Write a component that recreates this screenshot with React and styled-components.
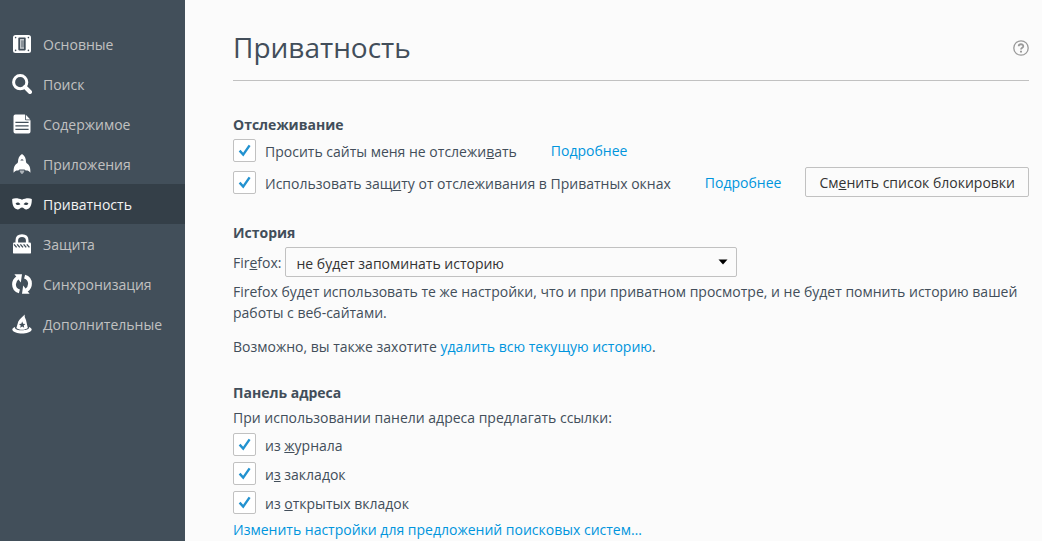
import React from "react";
import styled, { createGlobalStyle } from "styled-components";

const GlobalStyle = createGlobalStyle`
  * { box-sizing: border-box; }
  body {
    margin: 0;
    background: #fbfbfb;
    color: #424e5a;
    font: 14px/21px "Open Sans", "Noto Sans", sans-serif;
  }
`;

const Page = styled.div`
  display: flex;
  min-height: 100vh;
`;

const Sidebar = styled.nav`
  flex: 0 0 185px;
  padding-top: 24px;
  background: #424f5a;
`;

const Category = styled.a`
  display: flex;
  align-items: center;
  gap: 11px;
  height: 40px;
  padding-left: 12px;
  color: ${(p) => (p.$active ? "#f2f2f2" : "#c1c1c1")};
  background: ${(p) => (p.$active ? "#343f48" : "transparent")};
  text-decoration: none;
`;

const Icon = styled.svg`
  width: 20px;
  height: 20px;
  flex: none;
  fill: #fff;
  stroke: none;
`;

const Main = styled.main`
  flex: 1;
  min-width: 0;
  padding: 0 4px 0 48px;
`;

const Header = styled.header`
  display: flex;
  align-items: center;
  justify-content: space-between;
  height: 81px;
  margin: 0 9px 8px 0;
  padding-top: 14px;
  border-bottom: 1px solid #c1c1c1;
`;

const Title = styled.h1`
  margin: 0;
  font-size: 28px;
  font-weight: 400;
  line-height: 40px;
`;

const HelpButton = styled.button`
  display: flex;
  padding: 2px 0 0;
  border: 0;
  background: none;
`;

const Section = styled.section`
  padding-top: 25px;
`;

const Heading = styled.h2`
  margin: 0 0 4px;
  font-size: 14px;
  font-weight: 700;
`;

const Text = styled.p`
  margin: ${(p) => p.$top || 0}px 0 0;
`;

const Link = styled.a`
  color: #0095dd;
  text-decoration: none;
`;

const Options = styled.div`
  display: flex;
  flex-direction: column;
  gap: ${(p) => p.$gap}px;
  margin: ${(p) => p.$space || 0}px 9px ${(p) => p.$space || 0}px 0;
`;

const Row = styled.div`
  display: flex;
  align-items: center;
`;

const CheckLabel = styled.label`
  display: flex;
  align-items: center;
  gap: 9px;
  margin-right: 34px;
`;

const CheckText = styled.span`
  padding-top: 2px;
`;

const CheckBox = styled.span`
  display: grid;
  width: 23px;
  height: 23px;

  > * {
    grid-area: 1 / 1;
  }
`;

const CheckInput = styled.input`
  appearance: none;
  width: 23px;
  height: 23px;
  margin: 0;
  border: 1px solid #c1c1c1;
  border-radius: 2px;
  background: #fff;
`;

const CheckMark = styled.svg`
  width: 23px;
  height: 23px;
  fill: none;
  stroke: #2292d0;
  stroke-width: 2.4;
  pointer-events: none;
  visibility: hidden;

  ${CheckInput}:checked + & {
    visibility: visible;
  }
`;

const Button = styled.button`
  height: 30px;
  margin-left: auto;
  padding: 0 13px;
  border: 1px solid #c1c1c1;
  border-radius: 2px;
  background: #fbfbfb;
  color: #333;
  font: inherit;
  white-space: nowrap;
`;

const FieldLabel = styled.label`
  margin-right: 3px;
`;

const SelectBox = styled.span`
  display: grid;
  flex: 0 1 452px;
  align-items: center;

  > * {
    grid-area: 1 / 1;
  }
`;

const Select = styled.select`
  appearance: none;
  width: 100%;
  height: 30px;
  padding: 2px 30px 0 11px;
  border: 1px solid #c1c1c1;
  border-radius: 2px;
  background: #fbfbfb;
  color: #333;
  font: inherit;
`;

const Arrow = styled.svg`
  justify-self: end;
  width: 10px;
  height: 6px;
  margin-right: 9px;
  pointer-events: none;
`;

const BG = "#424f5a";

const icons = {
  general: (
    <>
      <rect x="1" y="1" width="18" height="18" rx="2.5" />
      <g fill={BG}>
        <circle cx="3.6" cy="3.6" r="0.8" />
        <circle cx="16.4" cy="3.6" r="0.8" />
        <circle cx="3.6" cy="16.4" r="0.8" />
        <circle cx="16.4" cy="16.4" r="0.8" />
        <rect x="6.3" y="3.6" width="7.4" height="12.8" rx="0.8" />
      </g>
      <rect x="8" y="5" width="4" height="9.8" fill="#c4c8cc" />
      <rect x="9" y="6.4" width="3" height="7" fill="#8a9299" />
    </>
  ),
  search: (
    <g fill="none" stroke="#fff">
      <circle cx="8.2" cy="8.2" r="6.6" strokeWidth="3" />
      <path d="M13 13 18 18" strokeWidth="4" strokeLinecap="round" />
    </g>
  ),
  content: (
    <>
      <path d="M3.4 0.5H13V5.2Q13 6.2 14 6.2H18.5V17.6Q18.5 19.5 16.6 19.5H3.4Q1.5 19.5 1.5 17.6V2.4Q1.5 0.5 3.4 0.5Z" />
      <path d="M13.8 0.7 18.3 5.4H13.8Z" />
      <path d="M3.4 8.4H16.6M3.4 11.9H16.6M3.4 15.4H16.6" stroke={BG} strokeWidth="1.4" />
    </>
  ),
  apps: (
    <>
      <path d="M10 0C12.8 1.8 14 4.6 14 7.8L14.4 9C17.4 11 18.6 13.4 18.4 18.8C17 16.8 15.4 16.4 13.7 16.6L12.5 15.4H7.5L6.3 16.6C4.6 16.4 3 16.8 1.6 18.8C1.4 13.4 2.6 11 5.6 9L6 7.8C6 4.6 7.2 1.8 10 0Z" />
      <path d="M8.3 6.4Q10 4.2 11.7 6.4Z" fill={BG} />
      <path d="M7.7 16.6H12.3C12.3 18.2 11.3 19.5 10 20C8.7 19.5 7.7 18.2 7.7 16.6Z" fill="#aeb4b9" />
    </>
  ),
  privacy: (
    <>
      <path d="M0.2 5C2.4 3.8 6.8 4 10 5.8C13.2 4 17.6 3.8 19.8 5C20 10.6 18.2 15.2 14.4 15.4C12.4 15.4 11.6 13.4 10 13.4C8.4 13.4 7.6 15.4 5.6 15.4C1.8 15.2 0 10.6 0.2 5Z" />
      <path
        d="M3.6 9.4C5 8 7.2 8.2 8.4 10.2C6.8 11.5 4.4 11.3 3.6 9.4ZM16.4 9.4C15 8 12.8 8.2 11.6 10.2C13.2 11.5 15.6 11.3 16.4 9.4Z"
        fill="#343f48"
      />
    </>
  ),
  security: (
    <>
      <path d="M4.8 10V6.4C4.8 3.4 6.8 1.6 10 1.6C13.2 1.6 15.2 3.4 15.2 6.4V10" fill="none" stroke="#fff" strokeWidth="2.6" />
      <rect x="1" y="8.6" width="18" height="11" rx="1.2" />
      <path
        d="M2 10.4 4.6 13.4M5.2 10.4 7.8 13.4M8.4 10.4 11 13.4M11.6 10.4 14.2 13.4M14.8 10.4 17.4 13.4"
        stroke={BG}
        strokeWidth="1.4"
      />
    </>
  ),
  sync: (
    <>
      <path
        d="M7.4 17.4C3.9 16.4 2 13.6 2 10.2C2 7.3 3.4 5.2 5.6 3.7M12.6 2.6C16.1 3.6 18 6.4 18 9.8C18 12.7 16.6 14.8 14.4 16.3"
        fill="none"
        stroke="#fff"
        strokeWidth="3.8"
      />
      <path d="M2.4 0.3 10 0.2 8.8 8.4ZM17.6 19.7 10 19.8 11.2 11.6Z" />
    </>
  ),
  advanced: (
    <>
      <path d="M12.8 0.4C12.2 2.6 13.4 4 14 6L15.8 14C13 16.4 7 16.4 4.4 14L6.3 7.6C7.6 4.6 10.4 3 12.8 0.4Z" />
      <path d="M3 13C1 13.7 0 14.9 0.4 16.1C2 20.7 18 20.7 19.6 16.1C20 14.9 19 13.7 17 13C18.2 17.2 2 17.4 3 13Z" />
      <path d="M10.2 7.6 11.1 9.8 13.4 10 11.7 11.5 12.2 13.8 10.2 12.6 8.2 13.8 8.7 11.5 7 10 9.3 9.8Z" fill={BG} />
    </>
  ),
};

const categories = [
  ["general", "Основные"],
  ["search", "Поиск"],
  ["content", "Содержимое"],
  ["apps", "Приложения"],
  ["privacy", "Приватность"],
  ["security", "Защита"],
  ["sync", "Синхронизация"],
  ["advanced", "Дополнительные"],
];

function Check({ children }) {
  return (
    <CheckLabel>
      <CheckBox>
        <CheckInput type="checkbox" defaultChecked />
        <CheckMark viewBox="0 0 23 23" aria-hidden="true">
          <path d="M6.6 11.6 10.2 15.6 16.6 6.4" />
        </CheckMark>
      </CheckBox>
      <CheckText>{children}</CheckText>
    </CheckLabel>
  );
}

export default function App() {
  return (
    <Page>
      <GlobalStyle />
      <Sidebar>
        {categories.map(([id, label]) => (
          <Category key={id} href={`#${id}`} $active={id === "privacy"}>
            <Icon viewBox="0 0 20 20" aria-hidden="true">
              {icons[id]}
            </Icon>
            {label}
          </Category>
        ))}
      </Sidebar>
      <Main>
        <Header>
          <Title>Приватность</Title>
          <HelpButton type="button" aria-label="Справка">
            <svg width="16" height="16" viewBox="0 0 16 16" fill="none" stroke="#999">
              <circle cx="8" cy="8" r="7.2" strokeWidth="1.3" />
              <path d="M5.7 6.3C5.7 3.6 10.3 3.6 10.3 6.2C10.3 7.8 8 7.8 8 9.6" strokeWidth="1.8" />
              <path d="M8 10.7V12.5" strokeWidth="2" />
            </svg>
          </HelpButton>
        </Header>

        <Section>
          <Heading>Отслеживание</Heading>
          <Options $gap={5}>
            <Row>
              <Check>
                Просить сайты меня не отслежи<u>в</u>ать
              </Check>
              <Link href="#dnt">Подробнее</Link>
            </Row>
            <Row>
              <Check>
                Использовать защ<u>и</u>ту от отслеживания в Приватных окнах
              </Check>
              <Link href="#protection">Подробнее</Link>
              <Button type="button">
                См<u>е</u>нить список блокировки
              </Button>
            </Row>
          </Options>
        </Section>

        <Section>
          <Heading>История</Heading>
          <Row>
            <FieldLabel htmlFor="history">
              Fir<u>e</u>fox:
            </FieldLabel>
            <SelectBox>
              <Select id="history" defaultValue="never">
                <option value="never">не будет запоминать историю</option>
              </Select>
              <Arrow viewBox="0 0 10 6" aria-hidden="true">
                <path d="M0.5 0.5H9.5L5 5.5Z" />
              </Arrow>
            </SelectBox>
          </Row>
          <Text $top={4}>
            Firefox будет использовать те же настройки, что и при приватном просмотре, и не будет помнить историю вашей
            работы с веб-сайтами.
          </Text>
          <Text $top={13}>
            Возможно, вы также захотите <Link href="#clear">удалить всю текущую историю</Link>.
          </Text>
        </Section>

        <Section>
          <Heading>Панель адреса</Heading>
          <Text>При использовании панели адреса предлагать ссылки:</Text>
          <Options $gap={6} $space={5}>
            <Check>
              из <u>ж</u>урнала
            </Check>
            <Check>
              и<u>з</u> закладок
            </Check>
            <Check>
              из <u>о</u>ткрытых вкладок
            </Check>
          </Options>
          <Text>
            <Link href="#suggestions">Изменить настройки для предложений поисковых систем…</Link>
          </Text>
        </Section>
      </Main>
    </Page>
  );
}
